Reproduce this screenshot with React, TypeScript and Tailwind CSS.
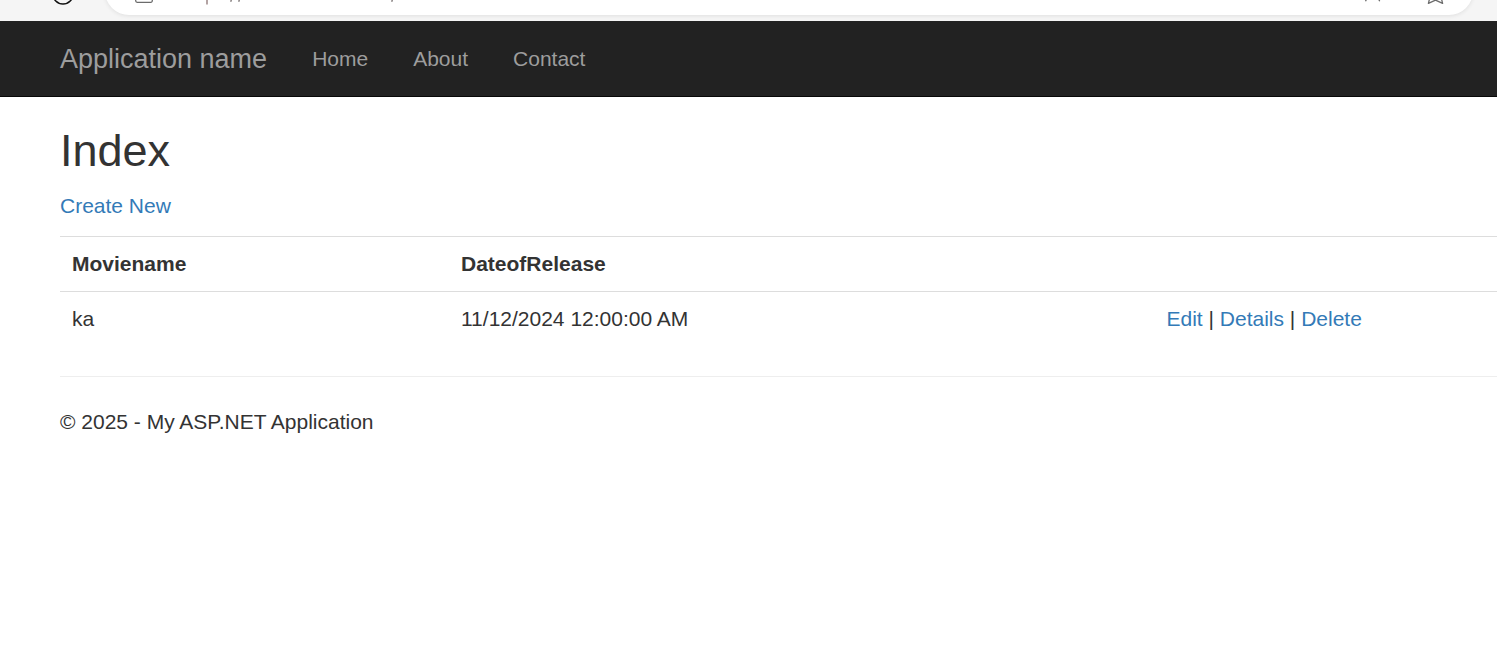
import type { ReactNode } from 'react';

const movies = [{ name: 'ka', released: '11/12/2024 12:00:00 AM' }];

function Link({ children }: { children: ReactNode }) {
  return (
    <a href="#" className="text-[#337ab7]">
      {children}
    </a>
  );
}

function BrowserEdge() {
  return (
    <div className="flex h-[21px] w-full items-end overflow-hidden bg-[#f5f5f5]">
      <svg className="h-[21px] w-[105px] shrink-0" viewBox="0 0 105 21" fill="none">
        <circle cx="63" cy="-6.2" r="10.2" stroke="#111" strokeWidth="1.5" />
      </svg>
      <div className="mb-1.5 flex h-[48px] w-[1368px] shrink-0 items-end rounded-[24px] bg-white shadow-[0_1px_4px_rgba(0,0,0,0.09)]">
        <svg className="h-[15px] w-[1368px]" viewBox="105 0 1368 15" fill="none">
          <rect x="135.7" y="-10" width="16.6" height="12.3" rx="1.5" stroke="#6b6b6b" strokeWidth="1.3" />
          <path d="M207 -2V4.6" stroke="#a08c8c" strokeWidth="1.6" />
          <path d="M230.7 1.8L231.9 -2M238.7 1.8L239.9 -2M391.7 1.8L392.9 -2" stroke="#8b8585" strokeWidth="1.5" />
          <path d="M1365.5 1.3L1367.5 -3M1379.7 1.3L1377.7 -3" stroke="#6b6b6b" strokeWidth="1.3" />
          <path d="M1430 -3L1428.4 3.4L1435.5 0.1L1442.6 3.4L1441 -3" stroke="#6b6b6b" strokeWidth="1.3" strokeLinejoin="round" />
        </svg>
      </div>
    </div>
  );
}

export default function App() {
  return (
    <div className="h-[661px] w-full overflow-hidden bg-white font-['Liberation_Sans',Arial,sans-serif] text-[21px] leading-[30px] text-[#333]">
      <BrowserEdge />
      <nav className="flex h-[76px] items-center border-b border-[#080808] bg-[#222] pl-[60px] text-[#9d9d9d]">
        <a href="#" className="mr-[45px] text-[27px]">
          Application name
        </a>
        <div className="flex gap-[45px]">
          <a href="#">Home</a>
          <a href="#">About</a>
          <a href="#">Contact</a>
        </div>
      </nav>
      <main className="pl-[60px]">
        <h2 className="pt-[29px] text-[45px] leading-[49px] font-normal">Index</h2>
        <p className="pt-4">
          <Link>Create New</Link>
        </p>
        <table className="mt-[15px] w-full table-fixed border-collapse text-left">
          <colgroup>
            <col className="w-[389px]" />
            <col className="w-[705px]" />
            <col />
          </colgroup>
          <tbody>
            <tr className="h-[55px] border-t border-[#ddd]">
              <th className="px-3 py-0">Moviename</th>
              <th className="px-3 py-0">DateofRelease</th>
              <th />
            </tr>
            {movies.map((movie) => (
              <tr key={movie.name} className="h-[55px] border-t border-[#ddd]">
                <td className="px-3 py-0">{movie.name}</td>
                <td className="px-3 py-0">{movie.released}</td>
                <td className="py-0 pr-3 pl-[12.5px] whitespace-nowrap">
                  <Link>Edit</Link> | <Link>Details</Link> | <Link>Delete</Link>
                </td>
              </tr>
            ))}
          </tbody>
        </table>
        <footer className="mt-[29px] border-t border-[#eee] pt-[30px]">
          <p>© 2025 - My ASP.NET Application</p>
        </footer>
      </main>
    </div>
  );
}
